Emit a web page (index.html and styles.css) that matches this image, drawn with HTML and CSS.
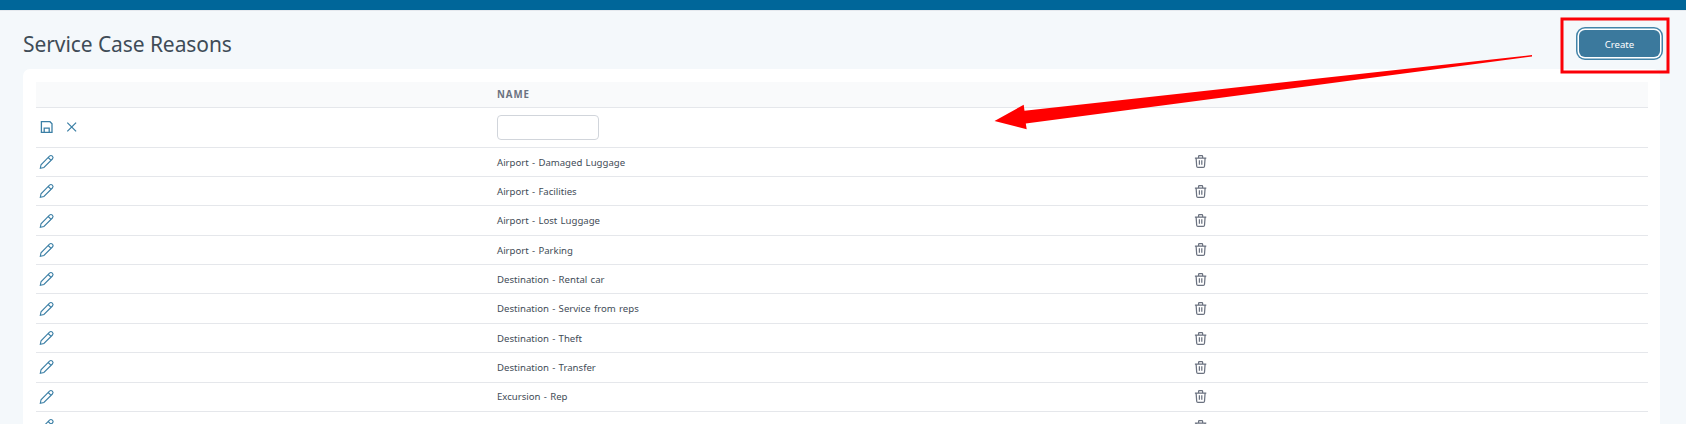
FILE: index.html
```html
<!DOCTYPE html>
<html lang="en">
<head>
<meta charset="utf-8">
<title>Service Case Reasons</title>
<link rel="stylesheet" href="styles.css">
</head>
<body>
<svg class="sprite" aria-hidden="true">
  <symbol id="pencil" viewBox="0.4 0 14 14" overflow="visible"><path d="M.7 13.300l.7-3.500L9.900 1.200a1.500 1.500 0 0 1 2.900 2.800L4.300 12.500zM8.600 2.500l2.900 2.900"/></symbol>
  <symbol id="trash" viewBox="0.4 0 12 13" overflow="visible"><path d="M.3 3h11.400M1.500 3l.6 8.300q.1 1.100 1.200 1.100h5.400q1.100 0 1.200-1.100L10.500 3M4 3V1.300Q4 .600 4.700.600h2.600Q8 .600 8 1.300V3M4.800 5.300v4.500M7.200 5.300v4.500"/></symbol>
</svg>
<div class="topbar"></div>
<main class="page">
  <header class="heading">
    <h1 class="title">Service Case Reasons</h1>
    <button class="create">Create</button>
  </header>
  <section class="card">
    <div class="row head"><span></span><span class="name">NAME</span></div>
    <div class="row edit">
      <span class="actions">
        <svg class="save" viewBox="0.3 0 12 12"><path d="M.7.7h8.600l2 2v8.600H.7zM3.500 11V7.200h5V11"/></svg>
        <svg class="cancel" viewBox="0.3 0 10 10"><path d="M.6.6l8.800 8.800M9.400.6L.6 9.400"/></svg>
      </span>
      <input class="field" type="text" aria-label="Name">
    </div>
    <div class="row item"><svg class="pencil"><use href="#pencil"/></svg><span class="label">Airport - Damaged Luggage</span><svg class="trash"><use href="#trash"/></svg></div>
    <div class="row item"><svg class="pencil"><use href="#pencil"/></svg><span class="label">Airport - Facilities</span><svg class="trash"><use href="#trash"/></svg></div>
    <div class="row item"><svg class="pencil"><use href="#pencil"/></svg><span class="label">Airport - Lost Luggage</span><svg class="trash"><use href="#trash"/></svg></div>
    <div class="row item"><svg class="pencil"><use href="#pencil"/></svg><span class="label">Airport - Parking</span><svg class="trash"><use href="#trash"/></svg></div>
    <div class="row item"><svg class="pencil"><use href="#pencil"/></svg><span class="label">Destination - Rental car</span><svg class="trash"><use href="#trash"/></svg></div>
    <div class="row item"><svg class="pencil"><use href="#pencil"/></svg><span class="label">Destination - Service from reps</span><svg class="trash"><use href="#trash"/></svg></div>
    <div class="row item"><svg class="pencil"><use href="#pencil"/></svg><span class="label">Destination - Theft</span><svg class="trash"><use href="#trash"/></svg></div>
    <div class="row item"><svg class="pencil"><use href="#pencil"/></svg><span class="label">Destination - Transfer</span><svg class="trash"><use href="#trash"/></svg></div>
    <div class="row item"><svg class="pencil"><use href="#pencil"/></svg><span class="label">Excursion - Rep</span><svg class="trash"><use href="#trash"/></svg></div>
    <div class="row item"><svg class="pencil"><use href="#pencil"/></svg><span class="label"></span><svg class="trash"><use href="#trash"/></svg></div>
  </section>
</main>
<svg class="annotation" viewBox="0 0 1686 424">
  <path class="arrow" d="M994.500 121L1023.700 104.700L1024.500 110.700L1532 55L1532 56.500L1025.800 123.500L1026.700 129.300Z"/>
  <rect class="frame" x="1562" y="19" width="106" height="53"/>
</svg>
</body>
</html>
```
FILE: styles.css
```css
* { box-sizing: border-box; }
body {
  margin: 0;
  height: 424px;
  overflow: hidden;
  background: #f4f8fb;
  color: #3f4c57;
  font-family: "Segoe UI", "Noto Sans", sans-serif;
}
.sprite { display: none; }
.topbar { height: 11px; background: #006699; border-bottom: 1px solid #e5e9ee; background-clip: padding-box; }
.page { padding: 0 26px 0 23px; }
.heading { height: 58px; display: flex; align-items: center; justify-content: space-between; }
.title { margin: 7px 0 0; font-size: 21px; font-weight: 400; line-height: 30px; letter-spacing: -.08px; }
.create {
  width: 81px;
  height: 27px;
  margin: 6px 0 0;
  padding: 2px 0 0;
  border: 0;
  border-radius: 6px;
  background: #3b799d;
  box-shadow: 0 0 0 1.500px #fff, 0 0 0 3px #4384a9;
  color: #fff;
  font: 9.600px/25px "Segoe UI", "Noto Sans", sans-serif;
}
.card { height: 355px; overflow: hidden; padding: 13px 12px 0 13px; border-radius: 7px 7px 0 0; background: #fff; }
.row {
  display: grid;
  grid-template-columns: 461px 697px 1fr;
  align-items: center;
  border-bottom: 1px solid #e5e7eb;
}
.head { height: 26px; background: #f9fafb; }
.name { color: #6b7280; font-size: 9.700px; font-weight: 700; letter-spacing: .9px; }
.edit { height: 39.770px; }
.actions { display: flex; align-items: center; gap: 14px; padding: 0 0 0 5px; }
.field { width: 102px; height: 25px; border: 1px solid #d1d5db; border-radius: 4px; background: #fff; }
.item { height: 29.350px; }
.label { padding-top: 1.500px; font-size: 9.600px; line-height: 14px; word-spacing: .8px; letter-spacing: 0; }
svg { display: block; fill: none; stroke: #3b7fa5; stroke-width: 1.100; overflow: visible; }
.pencil { width: 14px; height: 14px; margin: 0 0 0 4px; }
.trash { width: 12px; height: 13px; margin: 0 0 0 1px; stroke: #6b7280; stroke-width: 1.250; }
.save { width: 12px; height: 12px; stroke-width: 1.300; }
.cancel { width: 10px; height: 10px; stroke-width: 1.250; }
.annotation { position: absolute; left: 0; top: 0; width: 1686px; height: 424px; pointer-events: none; }
.arrow { fill: #f00; stroke: none; }
.frame { stroke: #fb0007; stroke-width: 3; }
```
